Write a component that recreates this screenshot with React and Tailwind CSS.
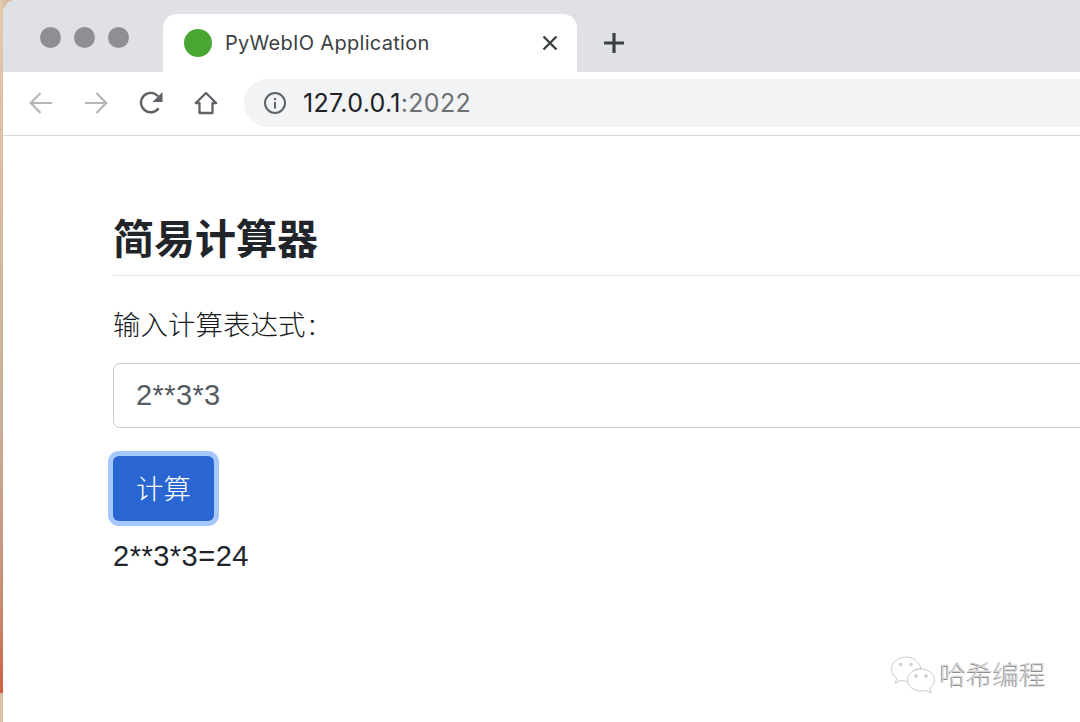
import React from 'react';

const cjk = 'font-["Inter","Noto_Sans_CJK_SC",sans-serif]';
const pageFont = 'font-["Liberation_Sans","Noto_Sans_CJK_SC",sans-serif]';

function ArrowIcon({ flip, color }) {
  return (
    <svg width="26" height="26" viewBox="0 0 26 26" fill="none" stroke={color} strokeWidth="2.2" className={flip ? 'rotate-180' : ''}>
      <path d="M24 13H3M12.5 3L2.8 13l9.7 10" />
    </svg>
  );
}

function ReloadIcon() {
  return (
    <svg width="26" height="26" viewBox="0 0 26 26" fill="none">
      <path d="M20.6 18.2A9.7 9.7 0 1 1 20 6.2" stroke="#5f6368" strokeWidth="2.4" />
      <path d="M24.5 2v10h-10z" fill="#5f6368" />
    </svg>
  );
}

function HomeIcon() {
  return (
    <svg width="26" height="26" viewBox="0 0 26 26" fill="none" stroke="#5f6368" strokeWidth="2.3" strokeLinejoin="round">
      <path d="M13 3L2.8 13H6.5v10h13V13h3.7z" />
    </svg>
  );
}

function InfoIcon() {
  return (
    <svg width="24" height="24" viewBox="0 0 24 24" fill="none">
      <circle cx="12" cy="12" r="10" stroke="#5f6368" strokeWidth="2" />
      <rect x="11" y="11" width="2" height="6.5" fill="#5f6368" />
      <rect x="11" y="7" width="2" height="2.2" fill="#5f6368" />
    </svg>
  );
}

function WeChatIcon() {
  return (
    <svg width="46" height="40" viewBox="0 0 46 40" fill="#fff" stroke="#c9c9c9" strokeWidth="1">
      <path d="M16 2C8 2 1.500 7.500 1.500 14c0 4 2 7 5.500 9.500L5 28l6-2.500c2 .6 3.500.8 5.500.8 1 0 1.800 0 2.500-.2C18 20 22 14 31 13.500 29.500 7 23.500 2 16 2z" />
      <path d="M31 14c-7.500 0-13.500 5-13.500 11s6 11 13.500 11c1.500 0 3-.2 4.500-.7L41 38l-1.500-5c3-2 5-4.800 5-8 0-6-6-11-13.500-11z" />
      <circle cx="10.500" cy="9.500" r="1.300" fill="#ddd" />
      <circle cx="21" cy="9.500" r="1.300" fill="#ddd" />
      <circle cx="26" cy="21" r="1.300" fill="#ddd" />
      <circle cx="36" cy="21" r="1.300" fill="#ddd" />
    </svg>
  );
}

export default function App() {
  return (
    <div className={`relative flex h-[722px] w-[1080px] overflow-hidden bg-[#d9bfa6] ${cjk}`}>
      <div className="flex w-[3px] shrink-0 flex-col">
        <div className="h-[693px] bg-[linear-gradient(to_bottom,#e4c9ac_0%,#c8ad98_62%,#c98c72_87%,#cf6040_100%)]"></div>
      </div>

      <div className="flex min-w-0 flex-1 flex-col overflow-hidden rounded-tl-[14px] bg-white">
        {/* tab strip */}
        <div className="flex h-[72px] shrink-0 bg-[#dfe1e5]">
          <div className="flex w-[160px] shrink-0 items-center gap-[13px] pl-[36.500px] pt-[2px]">
            <span className="h-[21px] w-[21px] rounded-full bg-[#8e8f92]"></span>
            <span className="h-[21px] w-[21px] rounded-full bg-[#8e8f92]"></span>
            <span className="h-[21px] w-[21px] rounded-full bg-[#8e8f92]"></span>
          </div>
          <div className="mt-[14px] flex w-[414px] shrink-0 items-center rounded-t-[14px] bg-white pl-[21px] pr-[18px]">
            <span className="h-[28px] w-[28px] shrink-0 rounded-full bg-[#4aa632]"></span>
            <span className="ml-[13px] flex-1 text-[20px] tracking-[0.3px] text-[#3c4043]">PyWebIO Application</span>
            <svg width="18" height="18" viewBox="0 0 18 18" stroke="#3c4043" strokeWidth="2.400">
              <path d="M2.500 2.500l13 13M15.500 2.500l-13 13" />
            </svg>
          </div>
          <div className="flex items-center pl-[26px] pt-[14px]">
            <svg width="22" height="22" viewBox="0 0 22 22" stroke="#3c4043" strokeWidth="3.200">
              <path d="M11 1v20M1 11h20" />
            </svg>
          </div>
        </div>

        {/* toolbar */}
        <div className="flex h-[64px] shrink-0 items-center border-b border-[#d9dadc] pb-[1px] pl-[25px]">
          <ArrowIcon color="#b4b6b9" />
          <div className="ml-[29px]"><ArrowIcon flip color="#b4b6b9" /></div>
          <div className="ml-[29px]"><ReloadIcon /></div>
          <div className="ml-[29px]"><HomeIcon /></div>
          <div className="ml-[25px] flex h-[48px] flex-1 items-center rounded-l-[24px] bg-[#f1f3f4] pl-[19px]">
            <InfoIcon />
            <span className="ml-[16px] pt-[2px] text-[25px] tracking-[0.3px] text-[#202124]">
              127.0.0.1<span className="text-[#6d7073]">:2022</span>
            </span>
          </div>
        </div>

        {/* page */}
        <div className={`relative flex-1 pl-[110px] pt-[75px] ${pageFont}`}>
          <h1 className="w-[1000px] border-b border-[#e3e3e3] pb-[6px] text-[41px] font-bold leading-[58px] text-[#212529]">简易计算器</h1>
          <p className="mt-[26px] text-[27.5px] font-light leading-[48px] text-[#16191c]">输入计算表达式<span className="ml-[3px]">:</span></p>
          <div className="mt-[13px] flex h-[65px] w-[1000px] items-center rounded-[7px] border border-[#c4cad0] pl-[22px] pt-[1px] text-[29px] tracking-[0.4px] text-[#555b61]">2**3*3</div>
          <button className="mt-[28px] flex h-[65px] w-[101px] items-center justify-center rounded-[6px] bg-[#2a66d2] pt-[2px] text-[27.5px] font-light text-white shadow-[0_0_0_5px_#a5c7fb]">计算</button>
          <p className="mt-[15px] text-[29px] leading-[40px] tracking-[0.5px] text-[#212529]">2**3*3=24</p>

          <div className="absolute bottom-[27px] right-[34px] flex items-center gap-[4px]">
            <WeChatIcon />
            <span className="text-[26.5px] font-light leading-[34px] text-[#d4d4d4] [text-shadow:-1px_1px_0_#8f8f8f]">哈希编程</span>
          </div>
        </div>
      </div>
    </div>
  );
}
